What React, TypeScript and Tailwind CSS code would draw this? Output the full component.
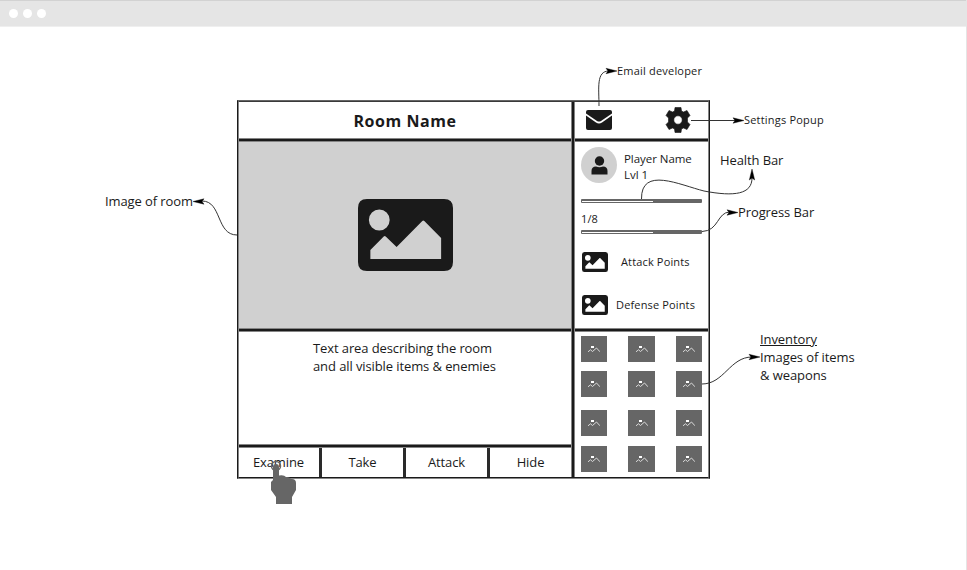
import React from "react";

const LABEL = "absolute whitespace-nowrap text-[#1a1a1a]";

function Picture({ className }: { className: string }) {
  return (
    <svg className={className} viewBox="0 0 96 72" preserveAspectRatio="none">
      <path
        fillRule="evenodd"
        fill="#1a1a1a"
        d="M9 0H87Q96 0 96 9V63Q96 72 87 72H9Q0 72 0 63V9Q0 0 9 0ZM21.500 10.500A10.500 10.500 0 1 0 21.500 31.500A10.500 10.500 0 1 0 21.500 10.500ZM12.500 60H84V39L67 22Q66 21 65 22L39 48L28 37.500Q27 36.500 26 37.500L12.500 51Z"
      />
    </svg>
  );
}

function Rule() {
  return <div className="h-1 shrink-0 border-y border-[#858585] bg-[#1a1a1a]" />;
}

function Item({ wide = false }: { wide?: boolean }) {
  return (
    <div className={`flex h-[26px] items-center justify-center bg-[#666] ${wide ? "w-[27px]" : "w-[26px]"}`}>
      <svg className="h-[8px] w-[12px]" viewBox="0 0 12 8" fill="none">
        <rect x="3" y="1" width="3" height="2" fill="#fff" />
        <path d="M0 6.800L2.500 4.800L4.500 6.500L8.500 3L12 6.800" stroke="#e5e5e5" strokeWidth="0.9" />
      </svg>
    </div>
  );
}

function ItemRow() {
  return (
    <div className="flex justify-between">
      <Item />
      <Item wide />
      <Item />
    </div>
  );
}

function Meter() {
  return (
    <div className="flex h-1 w-[121px] rounded-[1px] border border-t-2 border-[#666] bg-white">
      <div className="w-[71px]" />
      <div className="flex-1 bg-[#666]" />
    </div>
  );
}

function Action({ label }: { label: string }) {
  return <span className="w-[84px] border-r-[3px] border-[#2a2a2a] first:w-[83px] first:pr-px">{label}</span>;
}

function Arrows() {
  const lines = [
    "M599 106C599 88 596 71 609 71",
    "M691 120.500H738",
    "M641.500 199C641 166 680 185 704 191C735 197 752 194 752 178",
    "M702 231.500C719 231 717 212 730 212",
    "M702 384C724 384 730 357 752 357",
    "M237 235C216 235 222 201 202 201",
  ];
  const heads = [
    "M617 71L606 68.300L608 71L606 73.700Z",
    "M744 120.500L733 117.800L735 120.500L733 123.200Z",
    "M752 169L749.300 180L752 178L754.700 180Z",
    "M738 212.500L727 209.800L729 212.500L727 215.200Z",
    "M760 357L749 354.300L751 357L749 359.700Z",
    "M193 201.500L204 198.800L202 201.500L204 204.200Z",
  ];
  return (
    <svg className="pointer-events-none absolute left-0 top-0 h-[570px] w-[967px]" viewBox="0 0 967 570">
      {lines.map((d) => <path key={d} d={d} fill="none" stroke="#333" strokeWidth="1" />)}
      {heads.map((d) => <path key={d} d={d} fill="#000" stroke="#000" strokeWidth="0.4" />)}
    </svg>
  );
}

export default function App() {
  return (
    <div className="relative h-[570px] w-[967px] overflow-hidden border-r border-[#e5e5e5] bg-white font-['Open_Sans','Noto_Sans',sans-serif] text-[#1a1a1a]">
      <header className="flex h-[27px] items-center gap-[5px] border-b border-t border-b-[#efefef] border-t-[#d2d2d2] bg-[#e5e5e5] pl-[8.500px]">
        <i className="h-[9px] w-[9px] rounded-full bg-white" />
        <i className="h-[9px] w-[9px] rounded-full bg-white" />
        <i className="h-[9px] w-[9px] rounded-full bg-white" />
      </header>

      <main className="ml-[237px] mt-[73px] h-[379px] w-[473px] border border-b-[#858585] border-l-[#1a1a1a] border-r-[#1a1a1a] border-t-[#666]">
        <div className="flex h-full border border-b-[#1a1a1a] border-l-[#858585] border-r-[#858585] border-t-[#3a3a3a]">
          <section className="flex w-[332px] shrink-0 flex-col">
            <h1 className="flex h-[36px] items-center justify-center pt-[2px] text-[16px] font-bold tracking-[0.55px]">Room Name</h1>
            <Rule />
            <div className="flex h-[186px] items-center justify-center bg-[#d0d0d0] pl-px">
              <Picture className="h-[72px] w-[95px]" />
            </div>
            <Rule />
            <div className="h-[112px] pl-[74px] pt-[7px] text-[13px] leading-[18px] tracking-[-0.1px]">
              <p>Text area describing the room</p>
              <p>and all visible items &amp; enemies</p>
            </div>
            <Rule />
            <nav className="flex flex-1 text-center text-[13px] leading-[29px] tracking-[-0.1px]">
              <Action label="Examine" />
              <Action label="Take" />
              <Action label="Attack" />
              <span className="flex-1">Hide</span>
            </nav>
          </section>

          <div className="w-1 shrink-0 border-x border-[#858585] bg-[#1a1a1a]" />

          <aside className="flex flex-1 flex-col">
            <div className="flex h-[36px] items-center justify-between pl-[11px] pr-[17px]">
              <svg className="h-5 w-[26px]" viewBox="0 0 26 20" fill="#1a1a1a">
                <path d="M2 0H24Q26 0 26 2V3.500L15 11Q13 12.200 11 11L0 3.500V2Q0 0 2 0Z" />
                <path d="M0 5.500L10 12.500Q13 14.500 16 12.500L26 5.500V18Q26 20 24 20H2Q0 20 0 18Z" />
              </svg>
              <svg className="h-[26px] w-[26px]" viewBox="-13 -13 26 26" fill="#1a1a1a">
                <path fillRule="evenodd" d="M-3.500 -9L-3 -12.500H3L3.500 -9L5.500 -8L9 -9.500L12 -4.500L9.500 -2V2L12 4.500L9 9.500L5.500 8L3.500 9L3 12.500H-3L-3.500 9L-5.500 8L-9 9.500L-12 4.500L-9.500 2V-2L-12 -4.500L-9 -9.500L-5.500 -8ZM0 -4.200A4.200 4.200 0 1 0 0 4.200A4.200 4.200 0 1 0 0 -4.200Z" stroke="#1a1a1a" strokeWidth="0.6" strokeLinejoin="round" />
              </svg>
            </div>
            <Rule />
            <div className="h-[186px] pl-[6px] pt-[5px]">
              <div className="flex h-9 items-center gap-[7px]">
                <div className="flex h-9 w-9 items-center justify-center rounded-full bg-[#d0d0d0]">
                  <svg className="h-[19px] w-[17px]" viewBox="0 0 17 19" fill="#1a1a1a">
                    <circle cx="8.500" cy="5" r="4.700" />
                    <path d="M0.500 18.500V15Q0.500 10.500 5 10.500Q8.500 12 12 10.500Q16.500 10.500 16.500 15V18.500Z" />
                  </svg>
                </div>
                <div className="pt-[3px] text-[11.500px] leading-4 tracking-[-0.05px]">
                  <p>Player Name</p>
                  <p>Lvl 1</p>
                </div>
              </div>
              <div className="mt-4"><Meter /></div>
              <p className="h-[27px] pt-[7px] text-[11px] leading-[18px] tracking-[0.15px]">1/8</p>
              <Meter />
              <div className="mt-[18px] flex h-5 items-center pl-px text-[11px] tracking-[0.15px]">
                <Picture className="h-5 w-[26px]" />
                <span className="ml-[13px]">Attack Points</span>
              </div>
              <div className="mt-[23px] flex h-5 items-center pl-px text-[11px] tracking-[0.15px]">
                <Picture className="h-5 w-[26px]" />
                <span className="ml-[8px]">Defense Points</span>
              </div>
            </div>
            <Rule />
            <div className="flex flex-col pl-[6px] pr-[6px] pt-[4px]">
              <ItemRow />
              <div className="mt-[9px]"><ItemRow /></div>
              <div className="mt-[13px]"><ItemRow /></div>
              <div className="mt-[10px]"><ItemRow /></div>
            </div>
          </aside>
        </div>
      </main>

      <Arrows />
      <span className={`${LABEL} left-[617px] top-[63px] text-[11px] leading-4 tracking-[0.2px]`}>Email developer</span>
      <span className={`${LABEL} left-[744px] top-[112px] text-[11px] leading-4 tracking-[0.2px]`}>Settings Popup</span>
      <span className={`${LABEL} left-[720px] top-[151px] text-[13px] leading-[18px] tracking-[-0.1px]`}>Health Bar</span>
      <span className={`${LABEL} left-[738px] top-[203px] text-[13px] leading-[18px] tracking-[-0.1px]`}>Progress Bar</span>
      <span className={`${LABEL} left-[105px] top-[192px] text-[13px] leading-[18px] tracking-[-0.1px]`}>Image of room</span>
      <div className={`${LABEL} left-[760px] top-[330px] text-[13px] leading-[18px] tracking-[-0.08px]`}>
        <p className="underline">Inventory</p>
        <p>Images of items</p>
        <p>&amp; weapons</p>
      </div>
      <svg className="absolute left-[270px] top-[460px] h-[44px] w-[27px]" viewBox="0 0 27 44">
        <circle cx="6" cy="6" r="4.500" fill="none" stroke="#666" strokeWidth="1.500" />
        <path fill="#666" d="M3 7Q3 4 6 4Q9 4 9 7V15.500Q14 14.500 16 17Q19.500 16.500 21 19Q26 18.500 26 23V30L22 37V44H6V37L1 30V22L3 20Z" />
      </svg>
    </div>
  );
}
